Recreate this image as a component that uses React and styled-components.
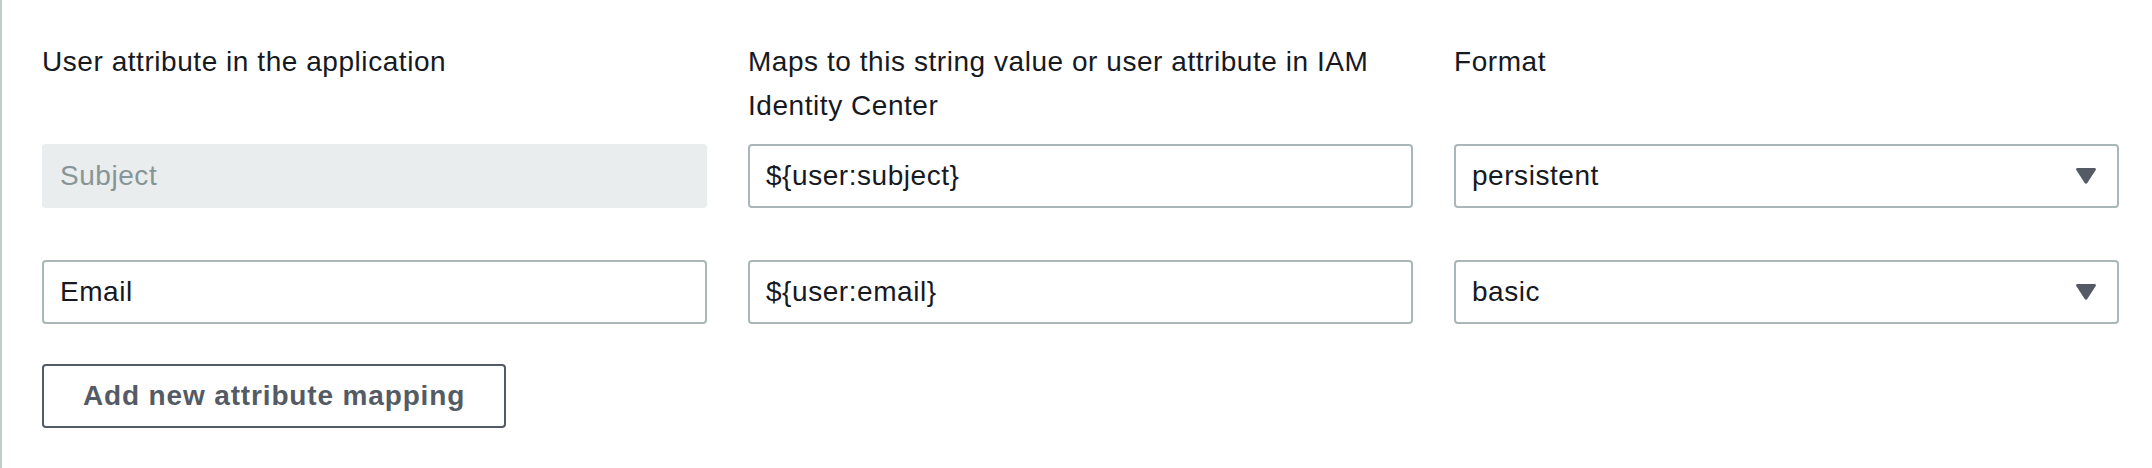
import React from 'react';
import styled, { createGlobalStyle } from 'styled-components';

const GlobalStyle = createGlobalStyle`
    html, body {
        margin: 0;
        padding: 0;
        background: #ffffff;
    }
    body {
        font-family: "Liberation Sans", Arial, sans-serif;
        color: #16191f;
    }
`;

const Panel = styled.div`
    height: 468px;
    box-sizing: border-box;
    border-left: 2px solid #c6cccc;
    padding: 40px 33px 0 40px;
`;

const Grid = styled.div`
    display: grid;
    grid-template-columns: repeat(3, 1fr);
    column-gap: 41px;
`;

const Label = styled.div`
    font-size: 28px;
    line-height: 44px;
    letter-spacing: 0.55px;
    color: #16191f;
    min-height: 88px;
    margin-bottom: 16px;
    padding-right: 20px;
`;

const Cell = styled.div`
    margin-bottom: ${props => (props.last ? '40px' : '52px')};
`;

const TextField = styled.div`
    box-sizing: border-box;
    height: 64px;
    display: flex;
    align-items: center;
    padding: 0 16px;
    border: 2px solid ${props => (props.disabled ? '#eaeded' : '#aab7b8')};
    border-radius: 4px;
    background: ${props => (props.disabled ? '#eaeded' : '#ffffff')};
    color: ${props => (props.disabled ? '#879596' : '#16191f')};
    font-size: 28px;
    letter-spacing: 0.55px;
`;

const SelectField = styled(TextField)`
    justify-content: space-between;
    padding-right: 21px;
`;

const Caret = styled.svg`
    width: 20px;
    height: 16px;
    flex-shrink: 0;
`;

const Button = styled.button`
    box-sizing: border-box;
    height: 64px;
    padding: 0 39px;
    border: 2px solid #545b64;
    border-radius: 4px;
    background: #ffffff;
    color: #545b64;
    font-family: "Liberation Sans", Arial, sans-serif;
    font-size: 28px;
    font-weight: 700;
    letter-spacing: 0.85px;
`;

const rows = [
    { name: 'Subject', value: '${user:subject}', format: 'persistent', locked: true },
    { name: 'Email', value: '${user:email}', format: 'basic', locked: false },
];

function Select({ value }) {
    return (
        <SelectField>
            <span>{value}</span>
            <Caret viewBox="0 0 20 16">
                <path d="M1.5 0h17c1.2 0 1.8 1.2 1.2 2.1L11.3 15.1c-.6.9-2 .9-2.6 0L.3 2.1C-.3 1.2.3 0 1.5 0z" fill="#545b64" />
            </Caret>
        </SelectField>
    );
}

export default function App() {
    return (
        <Panel>
            <GlobalStyle />
            <Grid>
                <Label>User attribute in the application</Label>
                <Label>Maps to this string value or user attribute in IAM Identity Center</Label>
                <Label>Format</Label>
                {rows.map((row, i) => (
                    <React.Fragment key={row.name}>
                        <Cell last={i === rows.length - 1}>
                            <TextField disabled={row.locked}>{row.name}</TextField>
                        </Cell>
                        <Cell last={i === rows.length - 1}>
                            <TextField>{row.value}</TextField>
                        </Cell>
                        <Cell last={i === rows.length - 1}>
                            <Select value={row.format} />
                        </Cell>
                    </React.Fragment>
                ))}
            </Grid>
            <Button>Add new attribute mapping</Button>
        </Panel>
    );
}
